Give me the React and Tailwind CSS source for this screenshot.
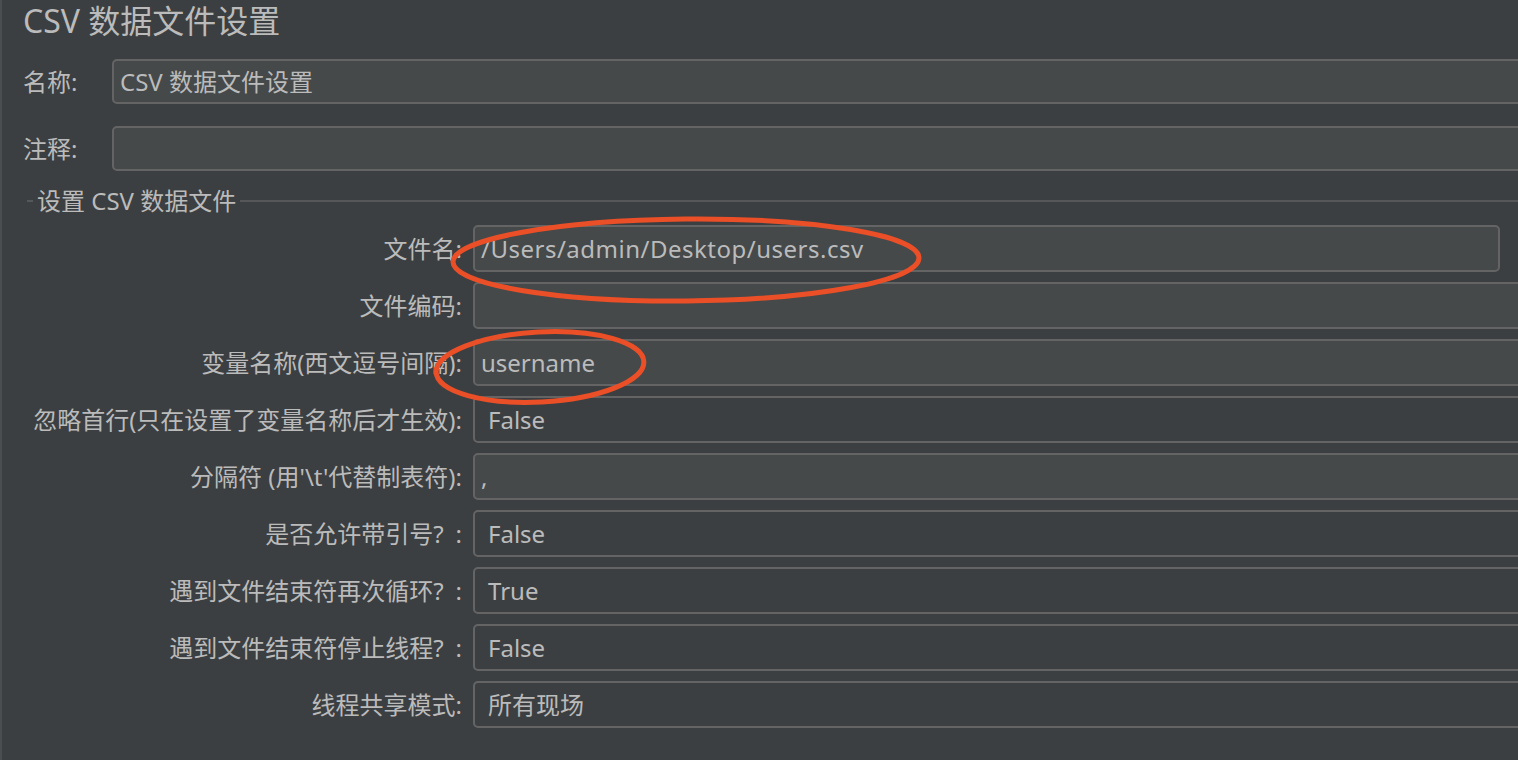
import React from "react";

const FONT = { fontFamily: '"Noto Sans", "Noto Sans CJK SC", sans-serif' };

function TextField({ value, wide }) {
  return (
    <div
      className={`h-[47px] ${wide ? "w-[1027px] tracking-[0.5px]" : "w-[1100px]"} shrink-0 rounded-[5px] border-2 border-[#646464] bg-[#45494a] pl-[6px] flex items-center text-[24px] text-[#bbbbbb] whitespace-nowrap`}
    >
      {value}
    </div>
  );
}

function Combo({ value }) {
  return (
    <div className="h-[47px] w-[1100px] shrink-0 rounded-[5px] border-2 border-[#646464] bg-[#3c3f41] pl-[13px] flex items-center text-[24px] text-[#bbbbbb] whitespace-nowrap">
      {value}
    </div>
  );
}

function Row({ label, children }) {
  return (
    <div className="flex items-center h-[47px]">
      <div className="w-[460px] shrink-0 text-right text-[24px] text-[#bbbbbb] whitespace-nowrap">
        {label}
      </div>
      <div className="ml-[11px] flex">{children}</div>
    </div>
  );
}

export default function App() {
  return (
    <div
      className="relative w-[1518px] h-[760px] overflow-hidden bg-[#3c3f41] border-l-2 border-[#4b4e50]"
      style={FONT}
    >
      <div className="h-[42px] leading-[42px] pl-[21px] text-[32px] text-[#bbbbbb] whitespace-nowrap">
        CSV 数据文件设置
      </div>

      <div className="mt-[17px] flex items-center h-[45px]">
        <div className="w-[90px] pl-[21px] shrink-0 text-[24px] text-[#bbbbbb]">名称:</div>
        <div className="ml-[20px] h-[45px] w-[1420px] shrink-0 rounded-[5px] border-2 border-[#646464] bg-[#45494a] pl-[6px] flex items-center text-[24px] text-[#bbbbbb] whitespace-nowrap">
          CSV 数据文件设置
        </div>
      </div>

      <div className="mt-[22px] flex items-center h-[45px]">
        <div className="w-[90px] pl-[21px] shrink-0 text-[24px] text-[#bbbbbb]">注释:</div>
        <div className="ml-[20px] h-[45px] w-[1420px] shrink-0 rounded-[5px] border-2 border-[#646464] bg-[#45494a]" />
      </div>

      <div className="mt-[18px] h-[24px] flex items-center">
        <div className="ml-[25px] w-[6px] h-[2px] bg-[#555759]" />
        <div className="px-[4px] text-[24px] leading-[24px] text-[#bbbbbb] whitespace-nowrap">
          设置 CSV 数据文件
        </div>
        <div className="flex-1 h-[2px] bg-[#555759]" />
      </div>

      <div className="mt-[12px] flex flex-col gap-[10px]">
        <Row label="文件名:">
          <TextField value="/Users/admin/Desktop/users.csv" wide />
        </Row>
        <Row label="文件编码:">
          <TextField value="" />
        </Row>
        <Row label="变量名称(西文逗号间隔):">
          <TextField value="username" />
        </Row>
        <Row label="忽略首行(只在设置了变量名称后才生效):">
          <Combo value="False" />
        </Row>
        <Row label={"分隔符 (用'\\t'代替制表符):"}>
          <TextField value="," />
        </Row>
        <Row label={"是否允许带引号?\u2002:"}>
          <Combo value="False" />
        </Row>
        <Row label={"遇到文件结束符再次循环?\u2002:"}>
          <Combo value="True" />
        </Row>
        <Row label={"遇到文件结束符停止线程?\u2002:"}>
          <Combo value="False" />
        </Row>
        <Row label="线程共享模式:">
          <Combo value="所有现场" />
        </Row>
      </div>

      <svg
        className="absolute left-0 top-0 pointer-events-none"
        width="1518"
        height="760"
        viewBox="0 0 1518 760"
      >
        <ellipse
          cx="684"
          cy="260"
          rx="233"
          ry="41"
          fill="none"
          stroke="#ea4f27"
          strokeWidth="5"
          transform="rotate(-0.5 684 260)"
        />
        <ellipse
          cx="538"
          cy="367"
          rx="104"
          ry="35"
          fill="none"
          stroke="#ea4f27"
          strokeWidth="5"
          transform="rotate(-3 538 367)"
        />
      </svg>
    </div>
  );
}
